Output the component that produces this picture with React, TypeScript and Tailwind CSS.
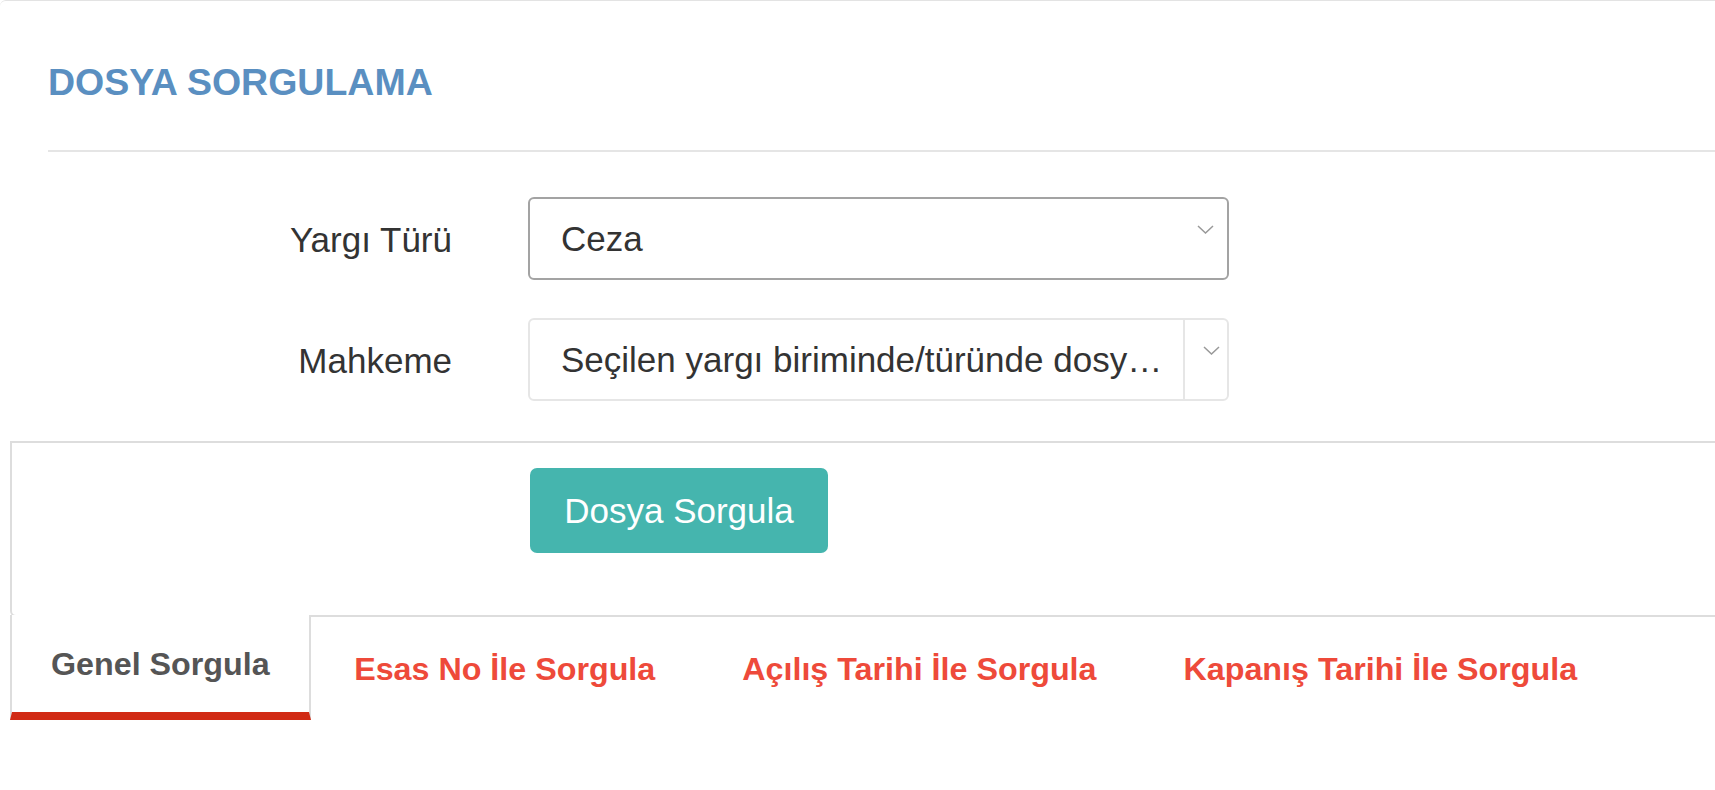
import type { ReactNode } from 'react';

function Chevron() {
  return (
    <svg width="17" height="9" viewBox="0 0 17 9" fill="none">
      <polyline points="1,1 8.5,8 16,1" stroke="#999" strokeWidth="1.5" />
    </svg>
  );
}

interface FieldRowProps {
  label: string;
  children: ReactNode;
}

function FieldRow({ label, children }: FieldRowProps) {
  return (
    <div className="flex items-center">
      <label className="w-[404px] pt-[3px] text-right text-[35px] leading-[40px] text-[#333]">{label}</label>
      <div className="ml-[76px]">{children}</div>
    </div>
  );
}

const tabs = ['Esas No İle Sorgula', 'Açılış Tarihi İle Sorgula', 'Kapanış Tarihi İle Sorgula'];

export default function App() {
  return (
    <div className="min-h-screen overflow-hidden bg-white font-['Liberation_Sans',Arial,sans-serif] text-[#333]">
      {/* Query card */}
      <div className="rounded-tl-[6px] border-t border-[#e3e3e3]">
        <div className="pl-12 pt-[61px]">
          <h2 className="text-[37.5px] font-bold leading-[40px] text-[#5a8fc1]">DOSYA SORGULAMA</h2>
          <div className="mt-[48px] h-[2px] bg-[#e5e5e5]" />
        </div>

        <div className="flex flex-col gap-[38px] pb-[40px] pl-12 pt-[45px]">
          <FieldRow label="Yargı Türü">
            <div className="flex h-[83px] w-[701px] items-start rounded-[6px] border-2 border-[#a3a3a3]">
              <span className="flex-1 self-center pl-[31px] text-[35px] leading-[40px]">Ceza</span>
              <span className="pr-[13px] pt-[26px]">
                <Chevron />
              </span>
            </div>
          </FieldRow>
          <FieldRow label="Mahkeme">
            <div className="flex h-[83px] w-[701px] items-stretch rounded-[6px] border-2 border-[#e6e6e6]">
              <span className="flex-1 self-center whitespace-nowrap pl-[31px] text-[35px] leading-[40px]">
                Seçilen yargı biriminde/türünde dosy…
              </span>
              <div className="w-[2px] bg-[#e6e6e6]" />
              <span className="pl-[18px] pr-[7px] pt-[26px]">
                <Chevron />
              </span>
            </div>
          </FieldRow>
        </div>
      </div>

      {/* Actions panel */}
      <div className="ml-[10px] rounded-bl-[6px] border-2 border-r-0 border-[#ddd] pb-[62px] pl-[518px] pt-[25px]">
        <button className="flex h-[85px] w-[298px] items-center justify-center rounded-[7px] bg-[#45b5ae] text-[35px] leading-[40px] text-white">
          Dosya Sorgula
        </button>
      </div>

      {/* Tabs */}
      <div className="ml-[10px] flex items-start">
        <div className="relative -mt-[2px] border-x-2 border-b-[8px] border-x-[#ddd] border-b-[#d12a14] bg-white px-[39px] pb-[32px] pt-[33px] text-[32.25px] font-bold leading-[32px] text-[#555]">
          Genel Sorgula
        </div>
        {tabs.map((t) => (
          <div key={t} className="px-[43.5px] pt-[36px] text-[32.25px] font-bold leading-[32px] text-[#ee4a3a]">
            {t}
          </div>
        ))}
      </div>
    </div>
  );
}
